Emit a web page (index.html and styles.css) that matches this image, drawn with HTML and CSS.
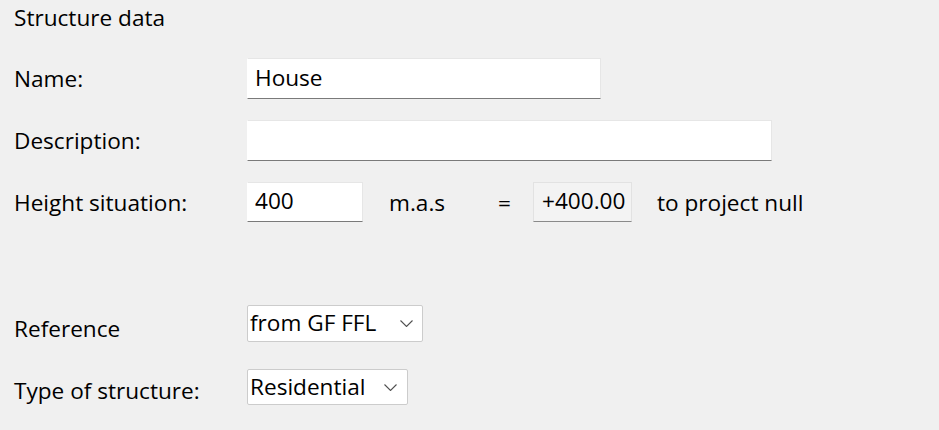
FILE: index.html
```html
<!DOCTYPE html>
<html lang="en">
<head>
<meta charset="utf-8">
<title>Structure data</title>
<link rel="stylesheet" href="styles.css">
</head>
<body>
<div class="panel">
  <div class="title">Structure data</div>

  <div class="row row-name">
    <div class="label">Name:</div>
    <input class="field field-name" type="text" value="House">
  </div>

  <div class="row row-desc">
    <div class="label">Description:</div>
    <input class="field field-desc" type="text" value="">
  </div>

  <div class="row row-height">
    <div class="label">Height situation:</div>
    <div class="controls">
      <input class="field field-height" type="text" value="400">
      <span class="unit">m.a.s</span>
      <span class="equals">=</span>
      <div class="readonly">+400.00</div>
      <span class="suffix">to project null</span>
    </div>
  </div>

  <div class="row row-ref">
    <div class="label">Reference</div>
    <div class="dropdown dropdown-ref">
      <span class="dropdown-text">from GF FFL</span>
      <svg class="chevron" width="13" height="7" viewBox="0 0 13 7"><path d="M0.5 0.5 L6.5 6.5 L12.5 0.5" fill="none" stroke="#505050" stroke-width="1.1"/></svg>
    </div>
  </div>

  <div class="row row-type">
    <div class="label">Type of structure:</div>
    <div class="dropdown dropdown-type">
      <span class="dropdown-text">Residential</span>
      <svg class="chevron" width="13" height="7" viewBox="0 0 13 7"><path d="M0.5 0.5 L6.5 6.5 L12.5 0.5" fill="none" stroke="#505050" stroke-width="1.1"/></svg>
    </div>
  </div>
</div>
</body>
</html>
```
FILE: styles.css
```css
html, body {
  margin: 0;
  padding: 0;
  background: #f0f0f0;
}

body {
  font-family: "Open Sans", "Noto Sans", sans-serif;
  font-size: 22.6px;
  line-height: 30px;
  color: #000;
}

.panel {
  display: flex;
  flex-direction: column;
  padding: 2.5px 14px 0 14px;
}

.title {
  height: 30px;
}

.row {
  display: grid;
  grid-template-columns: 233px 1fr;
  align-items: start;
}

.label {
  padding-top: 6px;
}

.row-name { margin-top: 25.5px; height: 41px; }
.row-desc { margin-top: 21px; height: 41px; }
.row-height { margin-top: 21px; height: 40px; }
.row-ref { margin-top: 83px; height: 37px; }
.row-type { margin-top: 27px; height: 36px; }

.row-ref .label { padding-top: 9px; }
.row-type .label { padding-top: 7px; }

.field {
  box-sizing: border-box;
  margin: 0;
  font: inherit;
  line-height: 30px;
  color: #000;
  background: #fff;
  border: 1px solid #e6e6e6;
  border-left-color: #fff;
  border-bottom: 1px solid #7a7a7a;
  border-radius: 0;
  padding: 0 8px 3px 7px;
  outline: none;
}

.field-name { width: 354px; height: 41px; }
.field-desc { width: 525px; height: 41px; }
.field-height { width: 116px; height: 40px; }

.controls {
  display: flex;
  align-items: flex-start;
}

.unit {
  margin-left: 26px;
  width: 109px;
  padding-top: 6px;
}

.equals {
  width: 35px;
  padding-top: 6px;
}

.readonly {
  box-sizing: border-box;
  width: 99px;
  height: 40px;
  padding: 3px 0 0 8px;
  background: #f3f3f3;
  border: 1px solid #e2e2e2;
  border-bottom-color: #8a8a8a;
  line-height: 30px;
}

.suffix {
  margin-left: 25px;
  padding-top: 6px;
}

.dropdown {
  box-sizing: border-box;
  display: flex;
  align-items: center;
  justify-content: space-between;
  background: #fff;
  border: 1px solid #cccccc;
  border-radius: 2px;
  padding: 0 9px 0 2px;
}

.dropdown-ref { width: 176px; height: 37px; }
.dropdown-type { width: 161px; height: 36px; padding-right: 10px; }

.dropdown-text {
  line-height: 30px;
  margin-top: -1px;
}

.chevron {
  display: block;
  flex: none;
}
```
